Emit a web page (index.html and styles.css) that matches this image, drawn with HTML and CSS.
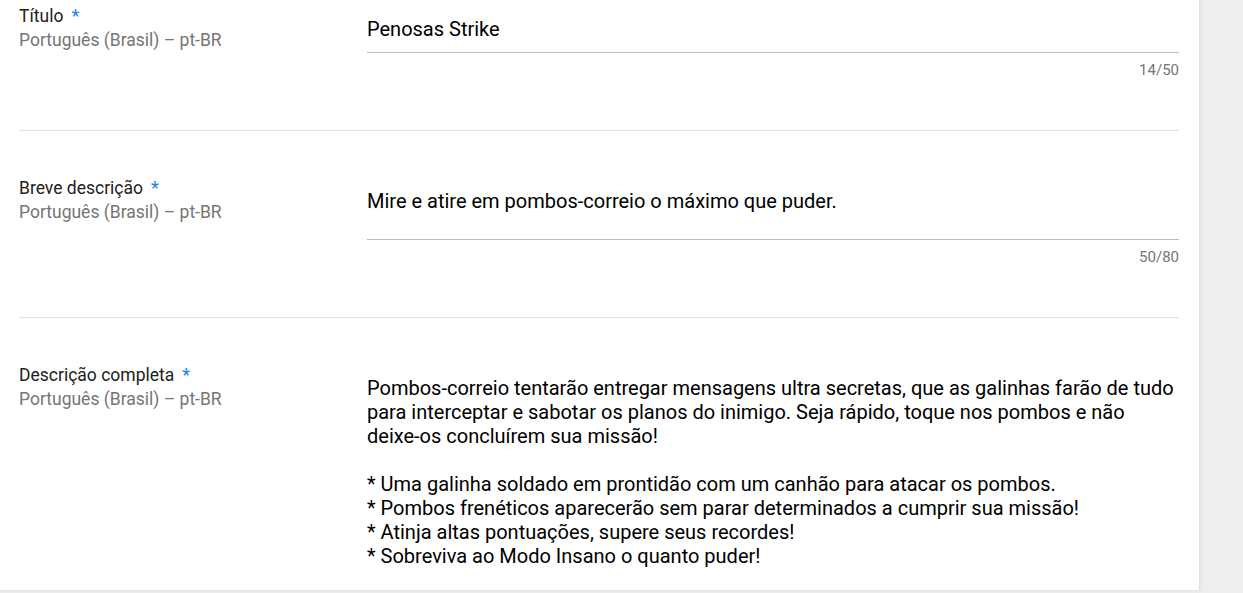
FILE: index.html
```html
<!DOCTYPE html>
<html lang="pt-BR">
<head>
<meta charset="utf-8">
<title>Ficha da loja</title>
<link rel="stylesheet" href="styles.css">
</head>
<body>
<div class="page">
  <main class="card">
    <div class="scroller">
      <section class="field field-short">
        <div class="field-label">
          <div class="label">Título<span class="req">*</span></div>
          <div class="sublabel">Português (Brasil) – pt-BR</div>
        </div>
        <div class="field-input">
          <div class="input input-single">Penosas Strike</div>
          <div class="counter">14/50</div>
        </div>
      </section>
      <section class="field">
        <div class="field-label">
          <div class="label">Breve descrição<span class="req">*</span></div>
          <div class="sublabel">Português (Brasil) – pt-BR</div>
        </div>
        <div class="field-input">
          <div class="input input-multi">Mire e atire em pombos-correio o máximo que puder.</div>
          <div class="counter">50/80</div>
        </div>
      </section>
      <section class="field field-last">
        <div class="field-label">
          <div class="label">Descrição completa<span class="req">*</span></div>
          <div class="sublabel">Português (Brasil) – pt-BR</div>
        </div>
        <div class="field-input">
          <div class="textarea">Pombos-correio tentarão entregar mensagens ultra secretas, que as galinhas farão de tudo
para interceptar e sabotar os planos do inimigo. Seja rápido, toque nos pombos e não
deixe-os concluírem sua missão!

* Uma galinha soldado em prontidão com um canhão para atacar os pombos.
* Pombos frenéticos aparecerão sem parar determinados a cumprir sua missão!
* Atinja altas pontuações, supere seus recordes!
* Sobreviva ao Modo Insano o quanto puder!</div>
        </div>
      </section>
    </div>
  </main>
  <aside class="side"></aside>
</div>
</body>
</html>
```
FILE: styles.css
```css
html, body {
  margin: 0;
  padding: 0;
  background: #eeeeee;
  font-family: Roboto, "Liberation Sans", Arial, sans-serif;
  color: #212121;
}

.page {
  display: flex;
  height: 593px;
  overflow: hidden;
}

.card {
  width: 1199px;
  height: 590px;
  flex: none;
  background: #ffffff;
  overflow: hidden;
  box-shadow: 1px 0 3px rgba(0, 0, 0, 0.10);
  position: relative;
  z-index: 1;
}

.side {
  flex: 1;
}

.scroller {
  margin-top: -41px;
  padding: 0 20px 0 19px;
}

.field {
  display: flex;
  border-bottom: 1px solid #e0e0e0;
}

.field-last {
  border-bottom: none;
}

.field-label {
  width: 348px;
  flex: none;
  padding-top: 45px;
}

.label {
  font-size: 17.5px;
  line-height: 24px;
  color: #212121;
}

.req {
  color: #1e88e5;
  margin-left: 8px;
  font-weight: 500;
}

.sublabel {
  font-size: 17.5px;
  line-height: 24px;
  color: #757575;
}

.field-input {
  flex: 1;
  min-width: 0;
  padding-top: 58px;
  padding-bottom: 50px;
}

.input {
  font-size: 20px;
  line-height: 24px;
  color: #000000;
  border-bottom: 1px solid #bdbdbd;
}

.input-single {
  padding-bottom: 11px;
}

.input-multi {
  padding-bottom: 26px;
}

.counter {
  margin-top: 7px;
  text-align: right;
  font-size: 15px;
  line-height: 20px;
  color: #757575;
}

.textarea {
  font-size: 20px;
  line-height: 24px;
  color: #000000;
  white-space: pre;
}
```
